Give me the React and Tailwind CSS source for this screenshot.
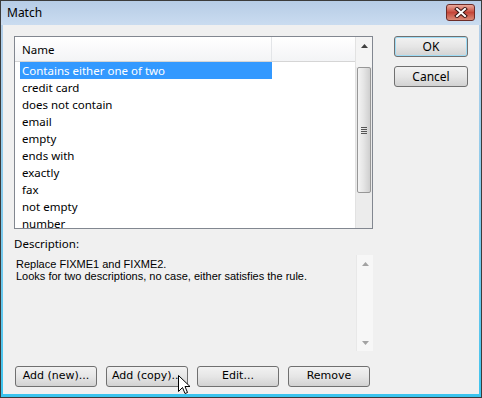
import { useState } from 'react'

const items = [
  'Contains either one of two',
  'credit card',
  'does not contain',
  'email',
  'empty',
  'ends with',
  'exactly',
  'fax',
  'not empty',
  'number',
]

const btn =
  'h-[21px] rounded-[3px] border border-[#707070] bg-gradient-to-b from-[#f2f2f2] via-[#e6e6e6] to-[#d2d2d2] text-[11px] text-black flex items-center justify-center'

export default function App() {
  const [selected, setSelected] = useState(0)

  return (
    <div className="w-[482px] h-[398px] bg-[#3b3b3b] p-px font-['Liberation_Sans',Arial,sans-serif]">
      <div className="w-full h-full flex flex-col bg-gradient-to-b from-[#b9cfe8] to-[#3ac4ee]">
        {/* Title bar */}
        <div className="h-[24px] shrink-0 flex items-center justify-between pl-[6px] pr-[6px] bg-gradient-to-b from-[#b6cce6] to-[#cadcf0]">
          <span className="text-[12px] text-black font-['Noto_Sans',sans-serif]">Match</span>
          <div className="w-[29px] h-[17px] mb-[2px] rounded-[3px] border border-[#6d2c28] bg-gradient-to-b from-[#e9a99c] via-[#c4463a] to-[#d98a78] flex items-center justify-center">
            <svg width="14" height="11" viewBox="0 0 14 11">
              <path d="M3 2 L11 9 M11 2 L3 9" stroke="#3a1512" strokeWidth="4" strokeLinecap="square" />
              <path d="M3 2 L11 9 M11 2 L3 9" stroke="#ffffff" strokeWidth="2" strokeLinecap="square" />
            </svg>
          </div>
        </div>

        {/* Client area */}
        <div className="flex-1 mx-[2px] mb-[3px] bg-[#f0f0f0] flex flex-col pt-[11px] pl-[11px] relative">
          <div className="flex">
            {/* List view */}
            <div className="w-[359px] h-[193px] border border-[#828790] bg-white flex">
              <div className="w-[340px] flex flex-col">
                <div className="h-[25px] shrink-0 flex border-b border-[#d5d5d5] bg-gradient-to-b from-white to-[#f3f4f6]">
                  <div className="w-[257px] border-r border-[#e3e5e8] pl-[7px] pt-px flex items-center text-[11.5px] text-black font-['Noto_Sans',sans-serif]">
                    Name
                  </div>
                </div>
                <div className="pl-[5px]">
                  {items.map((item, i) => (
                    <div
                      key={item}
                      onClick={() => setSelected(i)}
                      className={`w-[252px] h-[17px] pl-[2px] pt-px flex items-center text-[11.5px] font-['Noto_Sans',sans-serif] ${
                        i === selected ? 'bg-[#3399ff] text-white' : 'text-black'
                      }`}
                    >
                      {item}
                    </div>
                  ))}
                </div>
              </div>
              {/* Scrollbar */}
              <div className="w-[17px] flex flex-col bg-[#eaeaea] border-l border-[#e2e2e2]">
                <div className="h-[17px] flex items-center justify-center bg-[#f4f4f4]">
                  <svg width="7" height="4" viewBox="0 0 7 4">
                    <path d="M0 4 L3.5 0 L7 4 Z" fill="#404040" />
                  </svg>
                </div>
                <div className="h-[13px] bg-[#f4f4f4]" />
                <div className="h-[126px] mx-px rounded-[2px] border border-[#979797] bg-gradient-to-r from-[#f4f4f4] via-[#e4e4e4] to-[#cfcfcf] flex items-center justify-center">
                  <div className="flex flex-col gap-px">
                    <div className="w-[6px] h-px bg-[#555]" />
                    <div className="w-[6px] h-px bg-[#555]" />
                    <div className="w-[6px] h-px bg-[#555]" />
                    <div className="w-[6px] h-px bg-[#555]" />
                  </div>
                </div>
                <div className="flex-1 bg-[#ececec]" />
              </div>
            </div>

            {/* Dialog buttons */}
            <div className="ml-[21px] w-[74px] flex flex-col gap-[9px]">
              <div className={`${btn} border-[#3c7fb1] shadow-[inset_0_0_0_1px_#9fdcf5] text-[12px] font-['Noto_Sans',sans-serif]`}>OK</div>
              <div className={`${btn} text-[12px] font-['Noto_Sans',sans-serif]`}>Cancel</div>
            </div>
          </div>

          <div className="mt-[8px] h-[14px] flex items-center text-[11.5px] text-black font-['Noto_Sans',sans-serif]">
            Description:
          </div>

          {/* Description */}
          <div className="mt-[4px] w-[359px] h-[96px] flex">
            <div className="flex-1 pl-[2px] pt-[3px] text-[11px] leading-[12px] text-black">
              <p>Replace FIXME1 and FIXME2.</p>
              <p>Looks for two descriptions, no case, either satisfies the rule.</p>
            </div>
            <div className="w-[17px] flex flex-col justify-between bg-[#f7f7f7] border-l border-[#e8e8e8]">
              <div className="h-[17px] flex items-center justify-center">
                <svg width="7" height="4" viewBox="0 0 7 4">
                  <path d="M0 4 L3.5 0 L7 4 Z" fill="#a3a3a3" />
                </svg>
              </div>
              <div className="h-[17px] flex items-center justify-center">
                <svg width="7" height="4" viewBox="0 0 7 4">
                  <path d="M0 0 L7 0 L3.5 4 Z" fill="#a3a3a3" />
                </svg>
              </div>
            </div>
          </div>

          {/* Bottom buttons */}
          <div className="mt-[15px] pl-px flex gap-[9px]">
            <div className={`${btn} w-[82px] font-['DejaVu_Sans',sans-serif] text-[10px]`}>Add (new)...</div>
            <div className={`${btn} w-[82px] relative border-[#3c7fb1] from-[#eaf6fd] via-[#d9f0fc] to-[#a7d9f5] font-['DejaVu_Sans',sans-serif] text-[10px]`}>
              Add (copy)...
              <svg className="absolute left-[71px] top-[8px]" width="13" height="21" viewBox="0 0 13 21">
                <path
                  d="M0.5 0.5 L0.5 16.5 L4.5 12.5 L7 18.5 L9.5 17.5 L7 11.5 L12 11.5 Z"
                  fill="#ffffff"
                  stroke="#000000"
                  strokeWidth="1"
                  strokeLinejoin="miter"
                />
              </svg>
            </div>
            <div className={`${btn} w-[82px] font-['DejaVu_Sans',sans-serif] text-[10px]`}>Edit...</div>
            <div className={`${btn} w-[82px] font-['DejaVu_Sans',sans-serif] text-[10px]`}>Remove</div>
          </div>
        </div>
      </div>
    </div>
  )
}
